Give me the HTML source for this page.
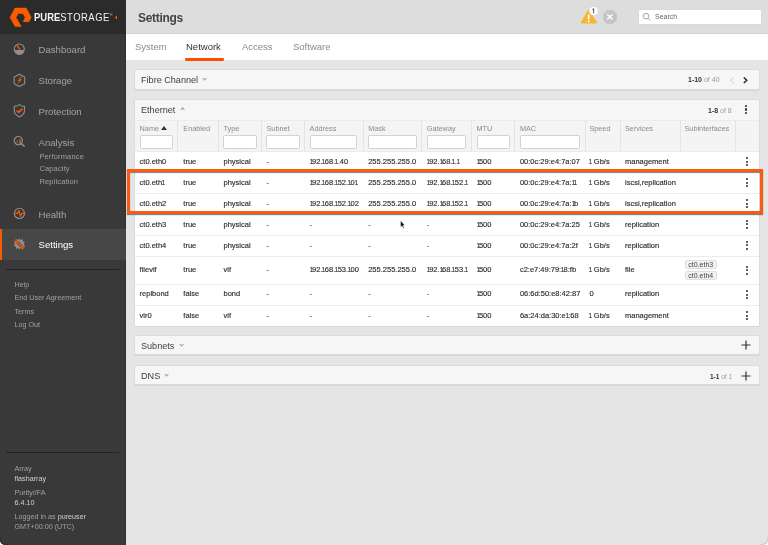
<!DOCTYPE html>
<html><head><meta charset="utf-8">
<style>
*{margin:0;padding:0;box-sizing:border-box}
html,body{width:768px;height:545px;overflow:hidden;background:#e5e5e5;font-family:"Liberation Sans",sans-serif}
.abs{position:absolute}
.nav,.sub,.foot,.tab,.ptitle,.th,.td,.tag,.gs{filter:grayscale(1)}
#side{position:absolute;left:0;top:0;width:126px;height:545px;background:#393939;box-shadow:inset -1px 0 0 #303030}
#sidetop{position:absolute;left:0;top:0;width:126px;height:34px;background:#2b2b2b}
.nav{position:absolute;left:38.5px;font-size:9.6px;line-height:12px;color:#a2a2a2;white-space:nowrap}
.sub{position:absolute;left:39.4px;font-size:7.5px;letter-spacing:0.15px;line-height:9px;color:#a0a0a0;white-space:nowrap}
.foot{position:absolute;left:14.5px;font-size:7.2px;line-height:9px;color:#a0a0a0;white-space:nowrap}
#hdr{position:absolute;left:126px;top:0;width:642px;height:34px;background:#dddddd;border-bottom:1px solid #d3d3d3}
#tabs{position:absolute;left:126px;top:34px;width:642px;height:26px;background:#fff}
.tab{position:absolute;top:41px;font-size:9.5px;line-height:12px;color:#8a8a8a;white-space:nowrap}
.panel{position:absolute;left:134px;width:626px;background:#f6f6f6;border:1px solid #dcdcdc;border-radius:2px;box-shadow:0 1px 0 #d6d6d6}
.ptitle{position:absolute;left:6px;font-size:9.1px;line-height:11px;color:#404040;white-space:nowrap}
.chev{display:inline-block;width:3.2px;height:3.2px;border-right:1px solid #9a9a9a;border-bottom:1px solid #9a9a9a;transform:rotate(45deg);margin-left:5.2px;position:relative;top:-3px}
.chevup{display:inline-block;width:3.2px;height:3.2px;border-left:1px solid #9a9a9a;border-top:1px solid #9a9a9a;transform:rotate(45deg);margin-left:5.5px;position:relative;top:-1.5px}
.th{position:absolute;top:123.5px;font-size:7.3px;line-height:9px;color:#8a8a8a;white-space:nowrap}
.tri{display:inline-block;width:0;height:0;border-left:3.5px solid transparent;border-right:3.5px solid transparent;border-bottom:4px solid #333;margin-left:2px;position:relative;top:-1px}
.inp{position:absolute;top:135.3px;height:13.6px;background:#fff;border:1px solid #d2d2d2;border-radius:1.5px}
.td{position:absolute;line-height:9px;font-size:7.5px;color:#2e2e2e;-webkit-text-stroke:0.15px #2e2e2e;white-space:nowrap}
.o{display:inline-block;width:2.4px;text-indent:-0.7px;transform:scaleX(.8)}
.tag{position:absolute;width:31.8px;height:9px;font-size:7px;line-height:8px;color:#444;background:#f2f2f2;border:1px solid #dedede;border-radius:2px;padding-left:2.5px;white-space:nowrap}
.kb{position:absolute;width:2px;height:9px}
.kb i{position:absolute;left:-0.1px;width:2.2px;height:2.2px;border-radius:50%;background:#2a2a2a}
</style></head><body>
<div id="wrap" style="position:absolute;left:0;top:0;width:768px;height:545px">
<div id="side">
  <div id="sidetop"></div>
  <svg class="abs" style="left:0;top:0" width="40" height="34" viewBox="0 0 40 34">
    <path d="M15,8.1 L26.3,8.1 L31.2,17.4 L28.8,21.7 L23.2,21.7 L25.2,17.4 L23,13.5 L18.3,13.5 L16,17.4 L21.2,26.6 L15.2,26.6 L10,17.4 Z" fill="#fa5a00" stroke="#fa5a00" stroke-width="0.6" stroke-linejoin="round"/>
  </svg>
  <div class="abs gs" style="left:34.2px;top:11px;font-size:10.7px;line-height:12px;color:#f4f4f4;white-space:nowrap;transform-origin:0 0;transform:scaleX(0.885)"><b>PURE</b><span style="letter-spacing:0.55px">STORAGE</span></div>
  <div class="abs gs" style="left:109.8px;top:11.5px;font-size:4px;line-height:5px;color:#ddd">®</div>
  <svg class="abs" style="left:114px;top:15px" width="4" height="5"><path d="M3,0.5 L0.8,2.5 L3,4.5 Z" fill="#fa5a00"/></svg>

  <!-- icons -->
  <div class="abs" style="left:0;top:229px;width:126px;height:31px;background:#474747"></div>
  <div class="abs" style="left:0;top:229px;width:2px;height:31px;background:#fa5a00"></div>
  <svg class="abs" style="left:12px;top:42.4px" width="15" height="15" viewBox="0 0 15 15">
    <circle cx="7.3" cy="7.0" r="5.0" fill="none" stroke="#8f8f8f" stroke-width="1.1"/>
    <path d="M2.3,7.9 A5.0,5.0 0 0 0 12.3,7.9 Z" fill="#8f8f8f"/>
    <path d="M5.2,3.6 L7.7,7.4" stroke="#fa5a00" stroke-width="1.2" stroke-linecap="round"/>
  </svg>
  <svg class="abs" style="left:12px;top:72px" width="16" height="16" viewBox="0 0 16 16">
    <path d="M7.4,2.3 L12.65,5.0 L12.65,11.7 L7.4,14.4 L2.15,11.7 L2.15,5.0 Z" fill="none" stroke="#8f8f8f" stroke-width="1.1" stroke-linejoin="round"/>
    <path d="M9.3,4.4 L6.0,8.7 L7.7,8.7 L6.3,11.3 L9.5,7.4 L7.8,7.4 Z" fill="#fa5a00" stroke="#fa5a00" stroke-width="0.4" stroke-linejoin="round"/>
  </svg>
  <svg class="abs" style="left:12px;top:102px" width="16" height="16" viewBox="0 0 16 16">
    <path d="M7.4,2.6 C8.6,3.8 10.6,4.3 12.5,4.4 L12.5,8.6 C12.5,11.4 10.2,13.6 7.4,15.0 C4.6,13.6 2.3,11.4 2.3,8.6 L2.3,4.4 C4.2,4.3 6.2,3.8 7.4,2.6 Z" fill="none" stroke="#8f8f8f" stroke-width="1.1" stroke-linejoin="round"/>
    <path d="M5.2,9.1 L6.7,10.2 L10.1,7.1" fill="none" stroke="#fa5a00" stroke-width="1.7" stroke-linecap="round" stroke-linejoin="round"/>
  </svg>
  <svg class="abs" style="left:11px;top:133px" width="16" height="16" viewBox="0 0 16 16">
    <circle cx="7.3" cy="7.6" r="4.1" fill="none" stroke="#8f8f8f" stroke-width="1.2"/>
    <path d="M10.3,10.6 L13.2,13.3" stroke="#8f8f8f" stroke-width="1.5" stroke-linecap="round"/>
    <path d="M6.2,10 L6.2,7.3" stroke="#6a6a6a" stroke-width="1.1"/>
    <path d="M9.0,10.4 L9.0,6.0" stroke="#fa5a00" stroke-width="1.4"/>
  </svg>
  <svg class="abs" style="left:12px;top:206px" width="15" height="15" viewBox="0 0 15 15">
    <circle cx="7.4" cy="7.4" r="5.1" fill="none" stroke="#8f8f8f" stroke-width="1.1"/>
    <path d="M1.8,7.4 L5.4,7.4 L6.9,4.4 L8.4,10.3 L9.7,7.4 L13.2,7.4" fill="none" stroke="#fa5a00" stroke-width="1.2" stroke-linejoin="round"/>
  </svg>
  <svg class="abs" style="left:12px;top:236px" width="16" height="16" viewBox="0 0 16 16">
    <path d="M7.4,2.6 L8.6,4.1 L10.8,3.3 L10.9,5.4 L13.0,6.2 L11.7,8.0 L13.0,9.9 L10.9,10.6 L10.8,12.7 L8.6,12.0 L7.4,13.6 L6.2,12.0 L4.0,12.7 L3.9,10.6 L1.8,9.9 L3.1,8.0 L1.8,6.2 L3.9,5.4 L4.0,3.3 L6.2,4.1 Z" fill="#8f8f8f"/>
    <path d="M4.4,5.2 L10.4,11.2" stroke="#3f3f3f" stroke-width="3"/>
    <path d="M4.4,5.2 L10.4,11.2" stroke="#fa5a00" stroke-width="1.6"/>
    <circle cx="4.2" cy="5.0" r="1.8" fill="#fa5a00"/>
    <circle cx="10.8" cy="11.4" r="1.8" fill="#fa5a00"/>
    <path d="M3.0,3.8 L4.4,5.2" stroke="#474747" stroke-width="1"/>
    <path d="M12.1,12.7 L10.6,11.2" stroke="#474747" stroke-width="1"/>
  </svg>

  <div class="nav" style="top:44px">Dashboard</div>
  <div class="nav" style="top:75px">Storage</div>
  <div class="nav" style="top:106px">Protection</div>
  <div class="nav" style="top:136.8px">Analysis</div>
  <div class="sub" style="top:152px">Performance</div>
  <div class="sub" style="top:164.3px">Capacity</div>
  <div class="sub" style="top:176.8px">Replication</div>
  <div class="nav" style="top:208.6px">Health</div>
  <div class="nav" style="top:239px;color:#fff">Settings</div>
  <div class="abs" style="left:6px;top:268.5px;width:113px;height:1px;background:#222"></div>
  <div class="foot" style="top:280px">Help</div>
  <div class="foot" style="top:293px">End User Agreement</div>
  <div class="foot" style="top:307px">Terms</div>
  <div class="foot" style="top:320px">Log Out</div>
  <div class="abs" style="left:6px;top:452px;width:113px;height:1px;background:#222"></div>
  <div class="foot" style="top:464px">Array</div>
  <div class="foot" style="top:474px;color:#d0d0d0">flasharray</div>
  <div class="foot" style="top:488px">Purity//FA</div>
  <div class="foot" style="top:498px;color:#d0d0d0">6.4.10</div>
  <div class="foot" style="top:512px">Logged in as <span style="color:#d0d0d0">pureuser</span></div>
  <div class="foot" style="top:522px">GMT+00:00 (UTC)</div>
</div>

<div id="hdr"></div>
<div class="abs gs" style="left:138px;top:11px;font-size:12px;line-height:14px;font-weight:bold;color:#444;letter-spacing:-0.3px">Settings</div>
<!-- warning -->
<svg class="abs" style="left:578px;top:4px" width="22" height="22" viewBox="0 0 22 22">
  <path d="M10.6,6.6 L18.2,18.6 L3.6,18.6 Z" fill="#f7b533" stroke="#f7b533" stroke-width="1.6" stroke-linejoin="round"/>
  <path d="M10.7,10.6 L10.7,15.4" stroke="#fff" stroke-width="1.7"/>
  <circle cx="10.7" cy="17.2" r="0.95" fill="#fff"/>
  <circle cx="15.4" cy="7.0" r="4.1" fill="#fff"/>
  <path d="M14.3,5.6 L15.7,4.6 L15.7,9.4" fill="none" stroke="#444" stroke-width="0.9"/>
</svg>
<!-- close -->
<svg class="abs" style="left:602.9px;top:9.9px" width="14" height="14" viewBox="0 0 14 14">
  <path d="M4.2,0.5 L9.8,0.5 L13.5,4.2 L13.5,9.8 L9.8,13.5 L4.2,13.5 L0.5,9.8 L0.5,4.2 Z" fill="#c4c4c4" stroke="#c4c4c4" stroke-width="0.8" stroke-linejoin="round"/>
  <path d="M4.2,4.2 L9.6,9.6 M9.6,4.2 L4.2,9.6" stroke="#fff" stroke-width="1.4"/>
</svg>
<div class="abs" style="left:639px;top:9.6px;width:122.4px;height:14.6px;background:#fff;box-shadow:0 0 0 0.5px #d6d6d6"></div>
<svg class="abs" style="left:641px;top:11px" width="12" height="12" viewBox="0 0 12 12">
  <circle cx="5" cy="5.2" r="2.8" fill="none" stroke="#999" stroke-width="0.9"/>
  <path d="M7,7.3 L9.2,9.6" stroke="#999" stroke-width="0.9"/>
</svg>
<div class="abs gs" style="left:655px;top:12px;font-size:7px;line-height:9px;color:#666">Search</div>

<div id="tabs"></div>
<div class="tab" style="left:135px">System</div>
<div class="tab" style="left:186px;color:#333">Network</div>
<div class="tab" style="left:242px">Access</div>
<div class="tab" style="left:293px">Software</div>
<div class="abs" style="left:185.2px;top:58.2px;width:38.7px;height:2.4px;background:#fa4f00;border-radius:1.2px"></div>

<div class="panel" style="top:69px;height:21px">
  <div class="ptitle" style="top:5px">Fibre Channel<span class="chev"></span></div>
  <div class="abs gs" style="left:553px;top:5px;font-size:7px;line-height:9px;white-space:nowrap;color:#999"><b style="color:#333">1-10</b> of 40</div>
  <svg class="abs" style="left:594px;top:6px" width="20" height="8" viewBox="0 0 20 8">
    <path d="M4.6,1.2 L1.6,4.2 L4.6,7.2" fill="none" stroke="#c8c8c8" stroke-width="0.9"/>
    <path d="M14.8,1.4 L17.8,4.2 L14.8,7" fill="none" stroke="#222" stroke-width="1.4"/>
  </svg>
</div>

<div class="panel" style="top:99px;height:227px;overflow:hidden">
  <div class="ptitle" style="top:5px">Ethernet<span class="chevup"></span></div>
  <div class="abs gs" style="left:573px;top:5.5px;font-size:7px;line-height:9px;white-space:nowrap;color:#999"><b style="color:#333">1-8</b> of 8</div>
  <div class="kb" style="left:610.4px;top:5.2px"><i style="top:0"></i><i style="top:3.3px"></i><i style="top:6.6px"></i></div>
</div>
<div class="abs" style="left:135px;top:120px;width:624px;height:31.5px;background:#f4f4f4"></div>
<div class="abs" style="left:135px;top:119.5px;width:624px;height:1px;background:#ececec"></div>
<div class="abs" style="left:177px;top:120px;width:1px;height:31.5px;background:#e4e4e4"></div>
<div class="abs" style="left:218px;top:120px;width:1px;height:31.5px;background:#e4e4e4"></div>
<div class="abs" style="left:261px;top:120px;width:1px;height:31.5px;background:#e4e4e4"></div>
<div class="abs" style="left:304px;top:120px;width:1px;height:31.5px;background:#e4e4e4"></div>
<div class="abs" style="left:363px;top:120px;width:1px;height:31.5px;background:#e4e4e4"></div>
<div class="abs" style="left:421px;top:120px;width:1px;height:31.5px;background:#e4e4e4"></div>
<div class="abs" style="left:471px;top:120px;width:1px;height:31.5px;background:#e4e4e4"></div>
<div class="abs" style="left:514px;top:120px;width:1px;height:31.5px;background:#e4e4e4"></div>
<div class="abs" style="left:585px;top:120px;width:1px;height:31.5px;background:#e4e4e4"></div>
<div class="abs" style="left:620px;top:120px;width:1px;height:31.5px;background:#e4e4e4"></div>
<div class="abs" style="left:680px;top:120px;width:1px;height:31.5px;background:#e4e4e4"></div>
<div class="abs" style="left:735px;top:120px;width:1px;height:31.5px;background:#e4e4e4"></div>
<div class="th" style="left:139.6px">Name<span class="tri"></span></div>
<div class="th" style="left:183.3px">Enabled</div>
<div class="th" style="left:223.5px">Type</div>
<div class="th" style="left:266.5px">Subnet</div>
<div class="th" style="left:309.6px">Address</div>
<div class="th" style="left:368.2px">Mask</div>
<div class="th" style="left:426.8px">Gateway</div>
<div class="th" style="left:476.5px">MTU</div>
<div class="th" style="left:519.9px">MAC</div>
<div class="th" style="left:589.4px">Speed</div>
<div class="th" style="left:625px">Services</div>
<div class="th" style="left:684.5px">Subinterfaces</div>
<div class="inp" style="left:139.6px;width:33.4px"></div>
<div class="inp" style="left:223.2px;width:33.4px"></div>
<div class="inp" style="left:266.2px;width:33.6px"></div>
<div class="inp" style="left:310.3px;width:47.2px"></div>
<div class="inp" style="left:368.3px;width:48.5px"></div>
<div class="inp" style="left:427px;width:39.2px"></div>
<div class="inp" style="left:476.7px;width:32.9px"></div>
<div class="inp" style="left:520.2px;width:59.4px"></div>
<div class="abs" style="left:135px;top:151.5px;width:624px;height:174px;background:#fff"></div>
<div class="abs" style="left:135px;top:151.3px;width:624px;height:1px;background:#ebebeb"></div>
<div class="td" style="left:139.6px;top:156.80px">ct0.eth0</div>
<div class="td" style="left:183.3px;top:156.80px">true</div>
<div class="td" style="left:223.5px;top:156.80px">physical</div>
<div class="td" style="left:266.5px;top:156.80px">-</div>
<div class="td" style="left:309.6px;top:156.80px"><span class="o">1</span>92.<span class="o">1</span>68.<span class="o">1</span>.40</div>
<div class="td" style="left:368.2px;top:156.80px">255.255.255.0</div>
<div class="td" style="left:426.8px;top:156.80px"><span class="o">1</span>92.<span class="o">1</span>68.<span class="o">1</span>.<span class="o">1</span></div>
<div class="td" style="left:476.5px;top:156.80px"><span class="o">1</span>500</div>
<div class="td" style="left:519.9px;top:156.80px">00:0c:29:e4:7a:07</div>
<div class="td" style="left:589.4px;top:156.80px"><span class="o">1</span> Gb/s</div>
<div class="td" style="left:625px;top:156.80px">management</div>
<div class="kb" style="left:746.2px;top:157.3px"><i style="top:0"></i><i style="top:3.5px"></i><i style="top:7px"></i></div>
<div class="abs" style="left:135px;top:172.3px;width:624px;height:1px;background:#ebebeb"></div>
<div class="td" style="left:139.6px;top:177.90px">ct0.eth<span class="o">1</span></div>
<div class="td" style="left:183.3px;top:177.90px">true</div>
<div class="td" style="left:223.5px;top:177.90px">physical</div>
<div class="td" style="left:266.5px;top:177.90px">-</div>
<div class="td" style="left:309.6px;top:177.90px"><span class="o">1</span>92.<span class="o">1</span>68.<span class="o">1</span>52.<span class="o">1</span>0<span class="o">1</span></div>
<div class="td" style="left:368.2px;top:177.90px">255.255.255.0</div>
<div class="td" style="left:426.8px;top:177.90px"><span class="o">1</span>92.<span class="o">1</span>68.<span class="o">1</span>52.<span class="o">1</span></div>
<div class="td" style="left:476.5px;top:177.90px"><span class="o">1</span>500</div>
<div class="td" style="left:519.9px;top:177.90px">00:0c:29:e4:7a:<span class="o">1</span><span class="o">1</span></div>
<div class="td" style="left:589.4px;top:177.90px"><span class="o">1</span> Gb/s</div>
<div class="td" style="left:625px;top:177.90px">iscsi,replication</div>
<div class="kb" style="left:746.2px;top:178.3px"><i style="top:0"></i><i style="top:3.5px"></i><i style="top:7px"></i></div>
<div class="abs" style="left:135px;top:193.3px;width:624px;height:1px;background:#ebebeb"></div>
<div class="td" style="left:139.6px;top:198.70px">ct0.eth2</div>
<div class="td" style="left:183.3px;top:198.70px">true</div>
<div class="td" style="left:223.5px;top:198.70px">physical</div>
<div class="td" style="left:266.5px;top:198.70px">-</div>
<div class="td" style="left:309.6px;top:198.70px"><span class="o">1</span>92.<span class="o">1</span>68.<span class="o">1</span>52.<span class="o">1</span>02</div>
<div class="td" style="left:368.2px;top:198.70px">255.255.255.0</div>
<div class="td" style="left:426.8px;top:198.70px"><span class="o">1</span>92.<span class="o">1</span>68.<span class="o">1</span>52.<span class="o">1</span></div>
<div class="td" style="left:476.5px;top:198.70px"><span class="o">1</span>500</div>
<div class="td" style="left:519.9px;top:198.70px">00:0c:29:e4:7a:<span class="o">1</span>b</div>
<div class="td" style="left:589.4px;top:198.70px"><span class="o">1</span> Gb/s</div>
<div class="td" style="left:625px;top:198.70px">iscsi,replication</div>
<div class="kb" style="left:746.2px;top:199.15px"><i style="top:0"></i><i style="top:3.5px"></i><i style="top:7px"></i></div>
<div class="abs" style="left:135px;top:214px;width:624px;height:1px;background:#ebebeb"></div>
<div class="td" style="left:139.6px;top:220.10px">ct0.eth3</div>
<div class="td" style="left:183.3px;top:220.10px">true</div>
<div class="td" style="left:223.5px;top:220.10px">physical</div>
<div class="td" style="left:266.5px;top:220.10px">-</div>
<div class="td" style="left:309.6px;top:220.10px">-</div>
<div class="td" style="left:368.2px;top:220.10px">-</div>
<div class="td" style="left:426.8px;top:220.10px">-</div>
<div class="td" style="left:476.5px;top:220.10px"><span class="o">1</span>500</div>
<div class="td" style="left:519.9px;top:220.10px">00:0c:29:e4:7a:25</div>
<div class="td" style="left:589.4px;top:220.10px"><span class="o">1</span> Gb/s</div>
<div class="td" style="left:625px;top:220.10px">replication</div>
<div class="kb" style="left:746.2px;top:219.8px"><i style="top:0"></i><i style="top:3.5px"></i><i style="top:7px"></i></div>
<div class="abs" style="left:135px;top:234.6px;width:624px;height:1px;background:#ebebeb"></div>
<div class="td" style="left:139.6px;top:241.30px">ct0.eth4</div>
<div class="td" style="left:183.3px;top:241.30px">true</div>
<div class="td" style="left:223.5px;top:241.30px">physical</div>
<div class="td" style="left:266.5px;top:241.30px">-</div>
<div class="td" style="left:309.6px;top:241.30px">-</div>
<div class="td" style="left:368.2px;top:241.30px">-</div>
<div class="td" style="left:426.8px;top:241.30px">-</div>
<div class="td" style="left:476.5px;top:241.30px"><span class="o">1</span>500</div>
<div class="td" style="left:519.9px;top:241.30px">00:0c:29:e4:7a:2f</div>
<div class="td" style="left:589.4px;top:241.30px"><span class="o">1</span> Gb/s</div>
<div class="td" style="left:625px;top:241.30px">replication</div>
<div class="kb" style="left:746.2px;top:240.8px"><i style="top:0"></i><i style="top:3.5px"></i><i style="top:7px"></i></div>
<div class="abs" style="left:135px;top:256px;width:624px;height:1px;background:#ebebeb"></div>
<div class="td" style="left:139.6px;top:265.10px">filevif</div>
<div class="td" style="left:183.3px;top:265.10px">true</div>
<div class="td" style="left:223.5px;top:265.10px">vif</div>
<div class="td" style="left:266.5px;top:265.10px">-</div>
<div class="td" style="left:309.6px;top:265.10px"><span class="o">1</span>92.<span class="o">1</span>68.<span class="o">1</span>53.<span class="o">1</span>00</div>
<div class="td" style="left:368.2px;top:265.10px">255.255.255.0</div>
<div class="td" style="left:426.8px;top:265.10px"><span class="o">1</span>92.<span class="o">1</span>68.<span class="o">1</span>53.<span class="o">1</span></div>
<div class="td" style="left:476.5px;top:265.10px"><span class="o">1</span>500</div>
<div class="td" style="left:519.9px;top:265.10px">c2:e7:49:79:<span class="o">1</span>8:fb</div>
<div class="td" style="left:589.4px;top:265.10px"><span class="o">1</span> Gb/s</div>
<div class="td" style="left:625px;top:265.10px">file</div>
<div class="tag" style="left:684.8px;top:260.05px">ct0.eth3</div>
<div class="tag" style="left:684.8px;top:271.05px">ct0.eth4</div>
<div class="kb" style="left:746.2px;top:265.55px"><i style="top:0"></i><i style="top:3.5px"></i><i style="top:7px"></i></div>
<div class="abs" style="left:135px;top:284.1px;width:624px;height:1px;background:#ebebeb"></div>
<div class="td" style="left:139.6px;top:289.40px">replbond</div>
<div class="td" style="left:183.3px;top:289.40px">false</div>
<div class="td" style="left:223.5px;top:289.40px">bond</div>
<div class="td" style="left:266.5px;top:289.40px">-</div>
<div class="td" style="left:309.6px;top:289.40px">-</div>
<div class="td" style="left:368.2px;top:289.40px">-</div>
<div class="td" style="left:426.8px;top:289.40px">-</div>
<div class="td" style="left:476.5px;top:289.40px"><span class="o">1</span>500</div>
<div class="td" style="left:519.9px;top:289.40px">06:6d:50:e8:42:87</div>
<div class="td" style="left:589.4px;top:289.40px">0</div>
<div class="td" style="left:625px;top:289.40px">replication</div>
<div class="kb" style="left:746.2px;top:290.20000000000005px"><i style="top:0"></i><i style="top:3.5px"></i><i style="top:7px"></i></div>
<div class="abs" style="left:135px;top:305.3px;width:624px;height:1px;background:#ebebeb"></div>
<div class="td" style="left:139.6px;top:311.00px">vir0</div>
<div class="td" style="left:183.3px;top:311.00px">false</div>
<div class="td" style="left:223.5px;top:311.00px">vif</div>
<div class="td" style="left:266.5px;top:311.00px">-</div>
<div class="td" style="left:309.6px;top:311.00px">-</div>
<div class="td" style="left:368.2px;top:311.00px">-</div>
<div class="td" style="left:426.8px;top:311.00px">-</div>
<div class="td" style="left:476.5px;top:311.00px"><span class="o">1</span>500</div>
<div class="td" style="left:519.9px;top:311.00px">6a:24:da:30:e<span class="o">1</span>:68</div>
<div class="td" style="left:589.4px;top:311.00px"><span class="o">1</span> Gb/s</div>
<div class="td" style="left:625px;top:311.00px">management</div>
<div class="kb" style="left:746.2px;top:311.0px"><i style="top:0"></i><i style="top:3.5px"></i><i style="top:7px"></i></div>

<div class="panel" style="top:335px;height:20px">
  <div class="ptitle" style="top:5px">Subnets<span class="chev"></span></div>
  <svg class="abs" style="left:606px;top:4px" width="10" height="10" viewBox="0 0 10 10"><path d="M5,0.5 L5,9.5 M0.5,5 L9.5,5" stroke="#333" stroke-width="1.2"/></svg>
</div>
<div class="panel" style="top:365px;height:20px">
  <div class="ptitle" style="top:5px">DNS<span class="chev"></span></div>
  <div class="abs gs" style="left:575px;top:5.5px;font-size:6.5px;line-height:9px;white-space:nowrap;color:#999"><b style="color:#333">1-1</b> of 1</div>
  <svg class="abs" style="left:606px;top:4.5px" width="10" height="10" viewBox="0 0 10 10"><path d="M5,0.5 L5,9.5 M0.5,5 L9.5,5" stroke="#333" stroke-width="1.2"/></svg>
</div>

<!-- highlight box -->
<div class="abs" style="left:127px;top:169.3px;width:635.7px;height:44.7px;border:3px solid #f95b14;box-shadow:inset 0 1px 1px rgba(0,0,0,0.45),0 1px 1px rgba(0,0,0,0.45)"></div>
<!-- cursor -->
<svg class="abs" style="left:399.6px;top:219.6px" width="8" height="11" viewBox="0 0 8 11">
  <path d="M0.5,0.5 L0.5,7.3 L2.0,5.9 L3.4,8.6 L4.3,8.2 L3.0,5.6 L5.0,5.6 Z" fill="#111" stroke="#fff" stroke-width="0.5" stroke-linejoin="round"/>
</svg>
<div class="abs" style="left:0;top:541px;width:4px;height:4px;background:#fff"></div>
<div class="abs" style="left:0;top:537px;width:8px;height:8px;border-bottom-left-radius:5px;background:#393939;box-shadow:inset 1px -1px 0 #2e2e2e"></div>
<div class="abs" style="left:764px;top:541px;width:4px;height:4px;background:#fff"></div>
<div class="abs" style="left:760px;top:537px;width:8px;height:8px;border-bottom-right-radius:5px;background:#e5e5e5;box-shadow:inset -1px -1px 0 #cfcfcf"></div>
</div>
</body></html>
